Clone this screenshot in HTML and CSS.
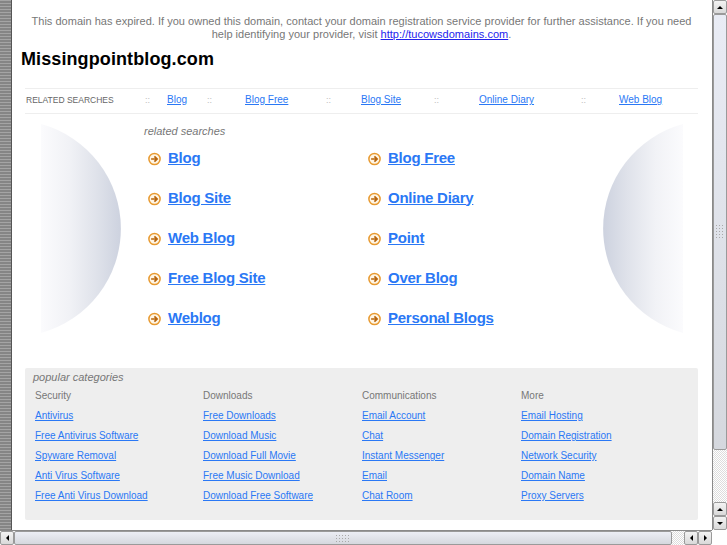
FILE: index.html
```html
<!DOCTYPE html>
<html>

<head>
    <title>Missingpointblog.com</title>
    <link rel="stylesheet" href="styles.css">
</head>

<body>
    <svg class="defs" width="0" height="0">
        <defs>
            <linearGradient id="moon-left">
                <stop offset="0" stop-color="#fbfbfd" />
                <stop offset="0.35" stop-color="#f1f2f6" />
                <stop offset="0.7" stop-color="#dfe2ea" />
                <stop offset="1" stop-color="#cdd2df" />
            </linearGradient>
            <linearGradient id="moon-right" x1="1" x2="0">
                <stop offset="0" stop-color="#fbfbfd" />
                <stop offset="0.35" stop-color="#f1f2f6" />
                <stop offset="0.7" stop-color="#dfe2ea" />
                <stop offset="1" stop-color="#cdd2df" />
            </linearGradient>
            <symbol id="go" viewBox="0 0 14 14">
                <circle cx="6.5" cy="7" r="5.6" fill="#fff6e6" stroke="#e89a30" stroke-width="1.5" />
                <path d="M3.1 7H8.5M6.4 4.4L9.1 7L6.4 9.6" fill="none" stroke="#b8650c" stroke-width="1.7" />
            </symbol>
        </defs>
    </svg>

    <div class="window">
        <div class="viewport">
            <div class="stripe"></div>
            <div class="page">
                <p class="notice">This domain has expired. If you owned this domain, contact your domain registration service provider for further assistance. If you need help identifying your provider, visit <a href="#">http://tucowsdomains.com</a>.</p>
                <h1>Missingpointblog.com</h1>

                <div class="topbar">
                    <span class="topbar-label">RELATED SEARCHES</span>
                    <span class="sep">::</span><a href="#">Blog</a>
                    <span class="sep">::</span><a href="#">Blog Free</a>
                    <span class="sep">::</span><a href="#">Blog Site</a>
                    <span class="sep">::</span><a href="#">Online Diary</a>
                    <span class="sep">::</span><a href="#">Web Blog</a>
                </div>

                <div class="middle">
                    <svg class="moon" width="82" height="210" viewBox="0 0 82 210">
                        <path d="M1 0A108.3 108.3 0 0 1 1 209Z" fill="url(#moon-left)" />
                    </svg>
                    <div class="related">
                        <h2>related searches</h2>
                        <div class="related-grid">
                            <div class="related-item"><svg><use href="#go" /></svg><a href="#">Blog</a></div>
                            <div class="related-item"><svg><use href="#go" /></svg><a href="#">Blog Free</a></div>
                            <div class="related-item"><svg><use href="#go" /></svg><a href="#">Blog Site</a></div>
                            <div class="related-item"><svg><use href="#go" /></svg><a href="#">Online Diary</a></div>
                            <div class="related-item"><svg><use href="#go" /></svg><a href="#">Web Blog</a></div>
                            <div class="related-item"><svg><use href="#go" /></svg><a href="#">Point</a></div>
                            <div class="related-item"><svg><use href="#go" /></svg><a href="#">Free Blog Site</a></div>
                            <div class="related-item"><svg><use href="#go" /></svg><a href="#">Over Blog</a></div>
                            <div class="related-item"><svg><use href="#go" /></svg><a href="#">Weblog</a></div>
                            <div class="related-item"><svg><use href="#go" /></svg><a href="#">Personal Blogs</a></div>
                        </div>
                    </div>
                    <svg class="moon" width="82" height="210" viewBox="0 0 82 210">
                        <path d="M81 0A108.3 108.3 0 0 0 81 209Z" fill="url(#moon-right)" />
                    </svg>
                </div>

                <div class="popular">
                    <h2>popular categories</h2>
                    <div class="popular-grid">
                        <div class="popular-col">
                            <h3>Security</h3>
                            <a href="#">Antivirus </a>
                            <a href="#">Free Antivirus Software</a>
                            <a href="#">Spyware Removal</a>
                            <a href="#">Anti Virus Software</a>
                            <a href="#">Free Anti Virus Download</a>
                        </div>
                        <div class="popular-col">
                            <h3>Downloads</h3>
                            <a href="#">Free Downloads</a>
                            <a href="#">Download Music</a>
                            <a href="#">Download Full Movie</a>
                            <a href="#">Free Music Download</a>
                            <a href="#">Download Free Software</a>
                        </div>
                        <div class="popular-col">
                            <h3>Communications</h3>
                            <a href="#">Email Account</a>
                            <a href="#">Chat</a>
                            <a href="#">Instant Messenger</a>
                            <a href="#">Email</a>
                            <a href="#">Chat Room</a>
                        </div>
                        <div class="popular-col">
                            <h3>More</h3>
                            <a href="#">Email Hosting</a>
                            <a href="#">Domain Registration</a>
                            <a href="#">Network Security</a>
                            <a href="#">Domain Name</a>
                            <a href="#">Proxy Servers</a>
                        </div>
                    </div>
                </div>
            </div>
        </div>

        <div class="vscroll">
            <div class="sb-btn"><span class="arrow up"></span></div>
            <div class="vthumb"><span class="grip"></span></div>
            <div class="vtrack"></div>
            <div class="sb-btn"><span class="arrow up"></span></div>
            <div class="sb-btn"><span class="arrow down"></span></div>
        </div>

        <div class="hscroll">
            <div class="sb-btn"><span class="arrow left"></span></div>
            <div class="hthumb"><span class="grip"></span></div>
            <div class="htrack"></div>
            <div class="sb-btn"><span class="arrow left"></span></div>
            <div class="sb-btn"><span class="arrow right"></span></div>
        </div>
        <div class="corner"></div>
    </div>
</body>

</html>
```

FILE: styles.css
```css
body {
    margin: 0;
    background: #ffffff;
    font-family: "Liberation Sans", Arial, sans-serif;
    overflow: hidden;
}

.defs {
    display: block;
    height: 0;
}

.window {
    display: grid;
    grid-template-columns: 712px 15px;
    grid-template-rows: 530px 15px;
    width: 727px;
    height: 545px;
    overflow: hidden;
}

.viewport {
    display: flex;
    overflow: hidden;
}

.stripe {
    flex: none;
    width: 12px;
    background: repeating-linear-gradient(to bottom, #a4a4a4 0, #a4a4a4 1px, #858585 1px, #858585 3px);
    border-right: 1px solid #555555;
    box-sizing: border-box;
}

.page {
    flex: 1;
    min-width: 0;
}

a {
    color: #2a78f5;
}

.notice {
    margin: 15px 11px 0 10px;
    font-size: 11px;
    line-height: 13px;
    letter-spacing: 0.02px;
    color: #777777;
    text-align: center;
}

.notice a {
    color: #2222ee;
}

h1 {
    margin: 6px 0 0 9px;
    font-size: 18px;
    line-height: 24px;
    letter-spacing: 0.1px;
    color: #000000;
}

.topbar {
    display: grid;
    grid-template-columns: 119px 22px 40px 38px 81px 35px 73px 45px 102px 38px 1fr;
    align-items: center;
    height: 24px;
    box-sizing: content-box;
    margin: 17px 14px 0 13px;
    padding: 0 0 0 1px;
    border-top: 1px solid #eeeeee;
    border-bottom: 1px solid #eeeeee;
    font-size: 10px;
    line-height: 22px;
}

.topbar > * {
    margin-bottom: 2px;
}

.topbar-label {
    font-size: 8.5px;
    color: #666666;
}

.sep {
    font-size: 9px;
    color: #bbbbbb;
}

.middle {
    display: flex;
    align-items: flex-start;
    height: 254px;
    margin: 0 28px;
}

.moon {
    flex: none;
    margin-top: 10px;
}

.related {
    flex: 1;
    padding: 10px 0 0 22px;
}

.related h2,
.popular h2 {
    margin: 0;
    font-size: 11px;
    line-height: 14px;
    font-style: italic;
    font-weight: normal;
    color: #777777;
}

.related-grid {
    display: grid;
    grid-template-columns: 220px 1fr;
    grid-auto-rows: 40px;
    margin: 6px 0 0 4px;
}

.related-item {
    display: flex;
    align-items: center;
    gap: 6px;
    height: 26px;
    font-size: 15px;
    letter-spacing: -0.25px;
    font-weight: bold;
}

.related-item svg {
    flex: none;
    width: 14px;
    height: 14px;
    margin-top: 3px;
}

.popular {
    height: 152px;
    box-sizing: border-box;
    margin: 0 14px 0 13px;
    padding: 2px 8px 0;
    border-radius: 2px;
    background: #eeeeee;
}

.popular-grid {
    display: grid;
    grid-template-columns: 168px 159px 159px 1fr;
    margin: 2px 0 0 2px;
}

.popular-col {
    display: flex;
    flex-direction: column;
    align-items: flex-start;
    font-size: 10px;
    line-height: 20px;
}

.popular-col h3 {
    margin: 0;
    font-size: 10px;
    font-weight: normal;
    color: #777777;
}

.vscroll {
    display: flex;
    flex-direction: column;
    border-left: 1px solid #8a8a8a;
    box-sizing: border-box;
}

.hscroll {
    display: flex;
    border-top: 1px solid #8a8a8a;
    box-sizing: border-box;
}

.sb-btn {
    flex: none;
    display: flex;
    align-items: center;
    justify-content: center;
    width: 14px;
    height: 14px;
    box-sizing: border-box;
    border: 1px solid #9a9a9a;
    border-radius: 2px;
    background: linear-gradient(to bottom, #f3f3f3, #d9d9d9);
}

.vthumb {
    flex: none;
    height: 436px;
    display: flex;
    align-items: center;
    justify-content: center;
    box-sizing: border-box;
    border: 1px solid #9a9a9a;
    border-radius: 2px;
    background: linear-gradient(to bottom, #e9ecf5, #d5d8de);
}

.hthumb {
    flex: none;
    width: 658px;
    display: flex;
    align-items: center;
    justify-content: center;
    box-sizing: border-box;
    border: 1px solid #9a9a9a;
    border-radius: 2px;
    background: linear-gradient(to bottom, #eceef5, #d5d8de);
}

.vtrack,
.htrack {
    flex: 1;
    background: repeating-conic-gradient(#dddddd 0 25%, #ffffff 0 50%) 0 0 / 2px 2px;
}

.grip {
    display: block;
    width: 16px;
    height: 9px;
    background: radial-gradient(circle, #a9a9a9 0.6px, transparent 1px) 0 0 / 3px 3px;
}

.vscroll .grip {
    width: 10px;
    height: 16px;
}

.arrow {
    width: 0;
    height: 0;
    border: 3.5px solid transparent;
}

.arrow.up {
    border-bottom-color: #000000;
    border-top-width: 0;
}

.arrow.down {
    border-top-color: #000000;
    border-bottom-width: 0;
}

.arrow.left {
    border-right-color: #000000;
    border-left-width: 0;
}

.arrow.right {
    border-left-color: #000000;
    border-right-width: 0;
}

.corner {
    background: #ffffff;
}
```
